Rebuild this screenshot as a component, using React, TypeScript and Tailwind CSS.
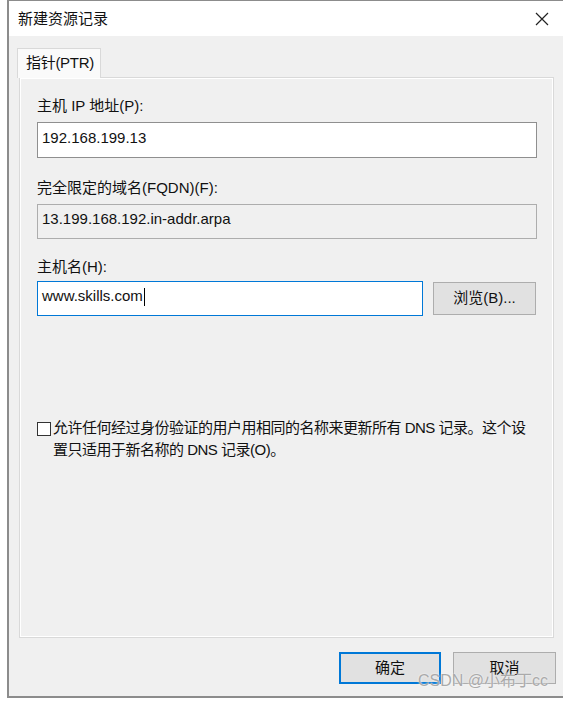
import React from 'react';

const font = { fontFamily: '"Liberation Sans", "Noto Sans CJK SC", sans-serif' };

export default function App() {
  return (
    <div className="relative w-[563px] h-[701px] bg-white overflow-hidden text-[15px] text-[#111]" style={font}>
      {/* dialog window */}
      <div className="ml-[7px] w-[560px] h-[698px] border-l-2 border-t border-b-2 border-[#8c8c8c] bg-[#f0f0f0] flex flex-col">
        {/* title bar */}
        <div className="h-[35px] bg-white flex items-center justify-between pl-[9px] pr-[6px]">
          <span className="leading-none">新建资源记录</span>
          <svg width="30" height="30" viewBox="0 0 30 30" className="mr-[4px]">
            <path d="M9 9 L21 21 M21 9 L9 21" stroke="#222" strokeWidth="1.2" />
          </svg>
        </div>

        {/* tab header */}
        <div className="mt-[12px] ml-[8px] flex">
          <div className="w-[84px] h-[30px] border border-b-0 border-[#d9d9d9] bg-[#fafafa] flex items-center pl-[8px] relative z-10 -mb-px tracking-[-0.3px]">
            指针(PTR)
          </div>
        </div>

        {/* tab page */}
        <div className="ml-[10px] w-[535px] h-[561px] border border-[#d9d9d9]">
          <div className="h-full border border-white pt-[17px] pl-[16px] pr-[15px] flex flex-col">
            <div className="h-[20px] leading-[20px]">主机 IP 地址(P):</div>
            <div className="mt-[6px] h-[36px] border border-[#8f8f8f] bg-white flex items-center pl-[4px] pb-[4px]">
              192.168.199.13
            </div>

            <div className="mt-[20px] h-[20px] leading-[20px]">完全限定的域名(FQDN)(F):</div>
            <div className="mt-[6px] h-[35px] border border-[#adadad] bg-[#f0f0f0] flex items-center pl-[4px] pb-[4px]">
              13.199.168.192.in-addr.arpa
            </div>

            <div className="mt-[18px] h-[20px] leading-[20px]">主机名(H):</div>
            <div className="mt-[4px] flex items-start gap-[10px]">
              <div className="w-[386px] h-[35px] border border-[#0078d7] bg-white flex items-center pl-[4px] pb-[4px]">
                www.skills.com
                <span className="ml-[1px] w-px h-[18px] bg-black" />
              </div>
              <div className="mt-px w-[103px] h-[33px] border border-[#adadad] bg-[#e1e1e1] flex items-center justify-center">
                浏览(B)...
              </div>
            </div>

            <div className="mt-[101px] flex items-start">
              <div className="mt-[5px] w-[14px] h-[14px] border border-[#333] bg-white shrink-0" />
              <div className="ml-[2px] leading-[22px] whitespace-nowrap tracking-[-0.5px]">
                允许任何经过身份验证的用户用相同的名称来更新所有 DNS 记录。这个设
                <br />
                置只适用于新名称的 DNS 记录(O)。
              </div>
            </div>
          </div>
        </div>

        {/* dialog buttons */}
        <div className="mt-[14px] flex justify-end gap-[12px] pr-[11px]">
          <div className="w-[102px] h-[32px] border-2 border-[#0078d7] bg-[#e1e1e1] flex items-center justify-center">
            确定
          </div>
          <div className="w-[103px] h-[32px] border border-[#adadad] bg-[#e1e1e1] flex items-center justify-center">
            取消
          </div>
        </div>
      </div>

      {/* watermark */}
      <div className="absolute left-[418px] top-[673px] text-[16px] text-[#aaaaaa] leading-none [text-shadow:0_0_2px_#fff]">
        CSDN @小布丁cc
      </div>
    </div>
  );
}
